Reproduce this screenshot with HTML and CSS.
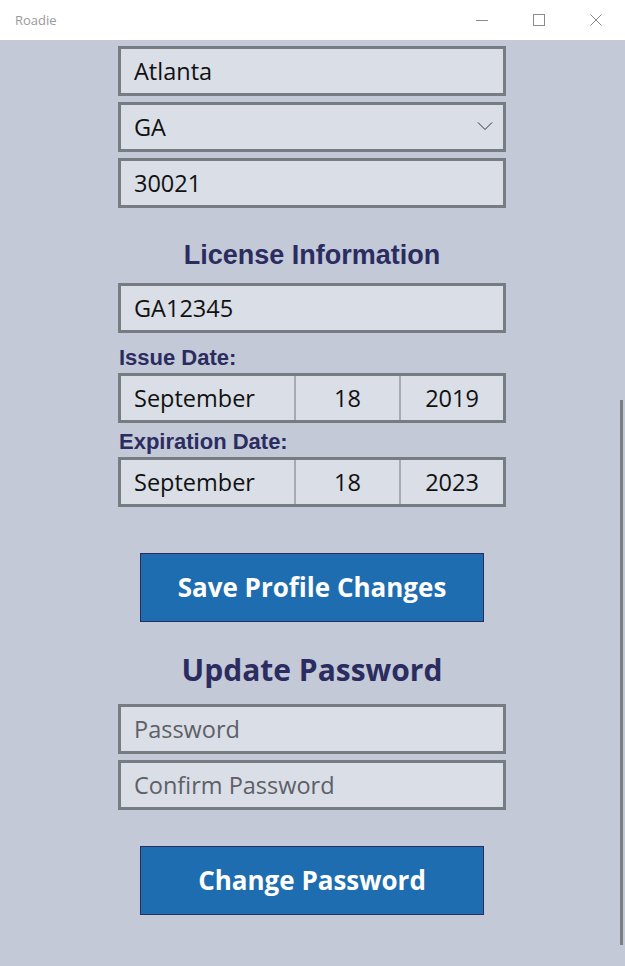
FILE: index.html
```html
<!DOCTYPE html>
<html>
<head>
    <title>Roadie</title>
    <link rel="stylesheet" href="styles.css">
</head>
<body>
    <div class="titlebar">
        <span class="app-name">Roadie</span>
        <div class="window-buttons">
            <svg class="win-btn" width="14" height="14" viewBox="0 0 14 14"><path d="M1 7.5h12" stroke="#8a8a8a" stroke-width="1"/></svg>
            <svg class="win-btn" width="14" height="14" viewBox="0 0 14 14"><rect x="1.5" y="1.5" width="11" height="11" fill="none" stroke="#8a8a8a" stroke-width="1"/></svg>
            <svg class="win-btn" width="14" height="14" viewBox="0 0 14 14"><path d="M1.5 1.5l11 11M12.5 1.5l-11 11" stroke="#8a8a8a" stroke-width="1"/></svg>
        </div>
    </div>

    <div class="page">
        <div class="form-column">
            <!-- Address (scrolled) -->
            <input class="field" type="text" value="Atlanta">
            <div class="select-wrap">
                <select class="field select-field">
                    <option>GA</option>
                </select>
                <svg class="chevron" width="16" height="8" viewBox="0 0 16 8"><path d="M1 0.5l7 7 7-7" fill="none" stroke="#333" stroke-width="1"/></svg>
            </div>
            <input class="field" type="text" value="30021">

            <h2 class="section-title">License Information</h2>
            <input class="field" type="text" value="GA12345">

            <div class="date-label">Issue Date:</div>
            <div class="date-row">
                <div class="date-cell month">September</div>
                <div class="date-cell day">18</div>
                <div class="date-cell year">2019</div>
            </div>

            <div class="date-label">Expiration Date:</div>
            <div class="date-row">
                <div class="date-cell month">September</div>
                <div class="date-cell day">18</div>
                <div class="date-cell year">2023</div>
            </div>

            <button class="action-btn save-btn">Save Profile Changes</button>

            <h2 class="password-title">Update Password</h2>
            <input class="field" type="password" placeholder="Password">
            <input class="field" type="password" placeholder="Confirm Password">

            <button class="action-btn change-btn">Change Password</button>
        </div>
    </div>

    <div class="scrollbar"></div>
</body>
</html>
```

FILE: styles.css
```css
body {
    margin: 0;
    font-family: "Open Sans", "Noto Sans", sans-serif;
    background-color: #c3c9d7;
    height: 966px;
    overflow: hidden;
}

.titlebar {
    height: 40px;
    background-color: #ffffff;
    display: flex;
    align-items: center;
    justify-content: space-between;
    padding-left: 15px;
}

.app-name {
    font-size: 13px;
    color: #9a9a9a;
}

.window-buttons {
    display: flex;
    align-items: center;
    gap: 43px;
    padding-right: 22px;
}

.win-btn {
    display: block;
}

.page {
    display: flex;
    padding: 6px 0 0 118px;
}

.form-column {
    width: 388px;
    display: flex;
    flex-direction: column;
}

.field {
    height: 50px;
    margin: 0 0 6px 0;
    padding: 0 13px;
    border: 3px solid #777b82;
    background-color: #dadee6;
    font-family: "Open Sans", "Noto Sans", sans-serif;
    font-size: 23.5px;
    color: #111111;
    box-sizing: border-box;  /* Include border in height */
    outline: none;
    border-radius: 0;
}

.field::placeholder {
    color: #5d6066;
}

.select-wrap {
    position: relative;
}

.select-field {
    width: 100%;
    appearance: none;
    -webkit-appearance: none;
}

.chevron {
    position: absolute;
    right: 13px;
    top: 20px;
}

.section-title {
    margin: 26px 0 13px 0;
    text-align: center;
    font-family: "Liberation Sans", Arial, sans-serif;
    font-size: 27px;
    line-height: 30px;
    font-weight: bold;
    color: #2b2c60;
}

.date-label {
    margin: 7px 0 3px 1px;
    font-family: "Liberation Sans", Arial, sans-serif;
    font-size: 22px;
    line-height: 24px;
    font-weight: bold;
    color: #2b2c60;
}

.date-row {
    display: flex;
    height: 50px;
    border: 3px solid #777b82;
    background-color: #dadee6;
    box-sizing: border-box;
}

.date-cell {
    display: flex;
    align-items: center;
    font-size: 23.5px;
    color: #111111;
    box-sizing: border-box;
}

.month {
    width: 173px;
    padding-left: 13px;
}

.day {
    width: 105px;
    justify-content: center;
    border-left: 2px solid #a6aab2;
}

.year {
    flex: 1;
    justify-content: center;
    border-left: 2px solid #a6aab2;
}

.action-btn {
    align-self: center;
    width: 344px;
    height: 69px;
    padding-bottom: 3px;
    background-color: #1f6db1;
    border: 1px solid #2b2c60;
    color: #ffffff;
    font-family: "Open Sans", "Noto Sans", sans-serif;
    font-size: 26px;
    font-weight: bold;
    cursor: pointer;
}

.save-btn {
    margin-top: 46px;
}

.change-btn {
    margin-top: 30px;
}

.password-title {
    margin: 28px 0 14px 0;
    text-align: center;
    font-size: 30px;
    line-height: 40px;
    font-weight: bold;
    color: #2b2c60;
}

/* Overlay scrollbar on the right edge */
.scrollbar {
    position: fixed;
    left: 620px;
    top: 400px;
    width: 3px;
    height: 545px;
    background-color: #7b7e85;
}
```
